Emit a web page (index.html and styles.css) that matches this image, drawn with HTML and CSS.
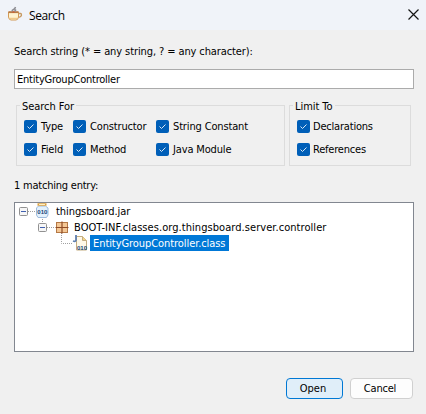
FILE: index.html
```html
<!DOCTYPE html>
<html lang="en">
<head>
<meta charset="utf-8">
<title>Search</title>
<link rel="stylesheet" href="styles.css">
</head>
<body>
<div class="dialog">
  <header class="titlebar">
    <svg class="cup" width="16" height="16" viewBox="0 0 16 16"><path d="M11 7.500h2.500q1 0 1 1.500t-3 2.500" fill="none" stroke="#c79a62" stroke-width="1.300"/><path d="M1.500 6h10v5q-.5 3-2.500 3H4q-2 0-2.500-3z" fill="#fff3cf" stroke="#d29a58"/><path d="M1.500 6.200h10" stroke="#b97a45" stroke-width="1.800"/><path d="M3 12.500h7" stroke="#efc98a" stroke-width="1.500"/><path d="M5 5.500q0-1.500 1.500-2t2-2.500M7.500 5.500l1.500-2" fill="none" stroke="#8d8d93" stroke-width="1.500"/><path d="M5.500 6h2" stroke="#d2512c"/></svg>
    <span class="t title">Search</span>
    <svg class="close" width="11" height="11" viewBox="0 0 11 11"><path d="M.5.5l10 10M10.500.5l-10 10" stroke="#151515" stroke-width="1.200"/></svg>
  </header>
  <main>
    <div class="prompt"><span class="t">Search string (* = any string, ? = any character):</span></div>
    <div class="field"><span class="t">EntityGroupController</span></div>
    <div class="groups">
      <section class="group for">
        <span class="legend">Search For</span>
        <div class="check"><i><svg viewBox="0 0 13 13"><path d="M3.500 6.500l2 2 4-4"/></svg></i><span class="t">Type</span></div>
        <div class="check"><i><svg viewBox="0 0 13 13"><path d="M3.500 6.500l2 2 4-4"/></svg></i><span class="t">Constructor</span></div>
        <div class="check"><i><svg viewBox="0 0 13 13"><path d="M3.500 6.500l2 2 4-4"/></svg></i><span class="t">String Constant</span></div>
        <div class="check"><i><svg viewBox="0 0 13 13"><path d="M3.500 6.500l2 2 4-4"/></svg></i><span class="t">Field</span></div>
        <div class="check"><i><svg viewBox="0 0 13 13"><path d="M3.500 6.500l2 2 4-4"/></svg></i><span class="t">Method</span></div>
        <div class="check"><i><svg viewBox="0 0 13 13"><path d="M3.500 6.500l2 2 4-4"/></svg></i><span class="t">Java Module</span></div>
      </section>
      <section class="group limit">
        <span class="legend">Limit To</span>
        <div class="check"><i><svg viewBox="0 0 13 13"><path d="M3.500 6.500l2 2 4-4"/></svg></i><span class="t">Declarations</span></div>
        <div class="check"><i><svg viewBox="0 0 13 13"><path d="M3.500 6.500l2 2 4-4"/></svg></i><span class="t">References</span></div>
      </section>
    </div>
    <div class="count"><span class="t">1 matching entry:</span></div>
    <div class="tree">
      <div class="row">
        <svg width="41" height="16" viewBox="15 203 41 16">
          <path class="dots" d="M28 211.500h8M42.500 217v2"/>
          <rect class="box" x="19.500" y="207.500" width="8" height="8" rx="1"/><path class="minus" d="M21 211.500h5"/>
          <path d="M38.500 206h7l2.500 2v7l-1.500 2.500h-8.500l-1.500-2.500v-7z" fill="#e3f1fc" stroke="#9dbbdc"/>
          <path d="M37.500 204.500h9" stroke="#dca243" stroke-width="2.500"/><path d="M39 204.500h6" stroke="#fff0c0"/>
          <text x="37.300" y="213.800">010</text>
        </svg>
        <span class="t jar">thingsboard.jar</span>
      </div>
      <div class="row">
        <svg width="59" height="16" viewBox="15 219 59 16">
          <path class="dots" d="M42.500 219v4M47 227.500h8M61.500 233v2"/>
          <rect class="box" x="38.500" y="223.500" width="8" height="8" rx="1"/><path class="minus" d="M40 227.500h5"/>
          <rect x="56.500" y="222.500" width="11" height="10" fill="#f4c795" stroke="#b47845"/>
          <path d="M62 221.500v12M55.500 227.500h13" stroke="#8f4b26" stroke-width="1.200"/>
        </svg>
        <span class="t pkg">BOOT-INF.classes.org.thingsboard.server.controller</span>
      </div>
      <div class="row">
        <svg width="75" height="16" viewBox="15 235 75 16">
          <path class="dots" d="M61.500 235v8.500H73"/>
          <path d="M76.500 236.500h6l4 4v9.500h-10z" fill="#fff9e8" stroke="#c3ad80"/><path d="M82.500 236.500v4h4" fill="#f5d68b" stroke="#c3ad80"/>
          <path d="M76 235v5q0 2-3 1" fill="none" stroke="#5f7fb0" stroke-width="1.800"/>
          <text x="77" y="249.500">010</text>
        </svg>
        <span class="t sel">EntityGroupController.class</span>
      </div>
    </div>
    <div class="actions"><button class="open">Open</button><button class="cancel">Cancel</button></div>
  </main>
</div>
</body>
</html>
```
FILE: styles.css
```css
*{box-sizing:border-box}
body{margin:0;background:#f0f0f0;font:11px/16px "DejaVu Sans Condensed","Noto Sans",sans-serif;color:#000}
.dialog{width:426px;height:414px;overflow:hidden}
.t{white-space:nowrap}
.titlebar{height:30px;background:#f0f3f9;display:flex;align-items:center;padding:0 7px}
.title{flex:1;margin-left:6px;font:12px "Open Sans",sans-serif;letter-spacing:-.4px}
.cup{margin-top:-2px}
.close{margin-top:-2px}
main{padding:14px 12px 0 14px}
.prompt{height:25px;letter-spacing:-.1px}
.field{height:20px;border:1px solid #ababab;background:#fff;padding:2px 2px 0;letter-spacing:-.23px}
.groups{display:flex;gap:4px;margin:16px 2px 0;letter-spacing:-.15px}
.group{border:1px solid #dcdcdc;height:61px;display:grid;padding:9px 0 0 7px;grid-auto-rows:23px;position:relative}
.for{width:269px;grid-template-columns:49px 83px 1fr}
.limit{width:122px;letter-spacing:-.2px}
.legend{position:absolute;left:3px;top:-7px;background:#f0f0f0;padding:0 2px;letter-spacing:-.05px}
.check{display:flex;align-items:center;gap:4px}
.limit .check{gap:3px}
.check i{width:13px;height:13px;background:#005fb8;border-radius:2px}
.check svg{display:block;fill:none;stroke:#d9e8f5}
.count{margin-top:12px;height:24px;letter-spacing:-.22px}
.tree{width:400px;height:150px;border:1px solid #828790;background:#fff}
.row{height:16px;display:flex;line-height:17px}
.row svg{flex:none;display:block}
.row text{font:bold 6px "Liberation Sans",sans-serif;fill:#174677}
.dots{fill:none;stroke:#a0a0a0;stroke-dasharray:1 1}
.box{fill:#f6f6f6;stroke:#919191}
.minus{stroke:#4060b0}
.jar{letter-spacing:-.07px}
.pkg{letter-spacing:.06px}
.sel{background:#0078d7;color:#fff;width:139px;height:16px;padding-left:3px;letter-spacing:-.07px}
.actions{display:flex;gap:7px;justify-content:flex-end;margin:26px 1px 0 0}
button{font:inherit;height:21px;width:57px;padding:0 3px 0 0;border:1px solid #0078d4;border-radius:4px;background:#e0eef9}
.cancel{width:63px;background:#fdfdfd;border-color:#d0d0d0;letter-spacing:-.2px}
```
